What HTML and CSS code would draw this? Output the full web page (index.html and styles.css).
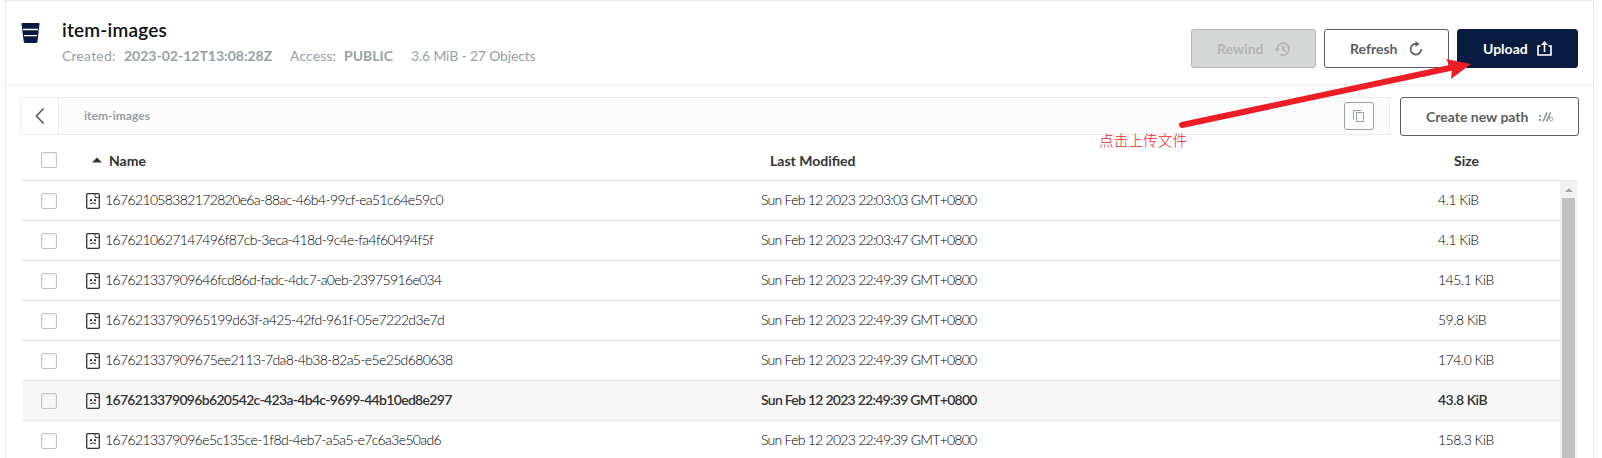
FILE: index.html
```html
<!DOCTYPE html>
<html lang="en">
<head>
<meta charset="utf-8">
<title>item-images</title>
<link rel="stylesheet" href="styles.css">
</head>
<body>
<main class="panel">
  <header class="head">
    <svg class="bucket" viewBox="0 0 18 20"><path fill="#081c42" d="M1 0h16q1.200 0 1 1L16 18.500q-.2 1.500-1.700 1.500H3.900q-1.500 0-1.700-1.500L0 1Q-.2 0 1 0z"/><path stroke="#fff" stroke-width="1.300" d="M1.500 6.500h15M2.500 12.700h13"/></svg>
    <div class="info">
      <h1><span>item-images</span></h1>
      <p><span class="m1">Created:</span><b class="m2">2023-02-12T13:08:28Z</b><span class="m3">Access:</span><b class="m4">PUBLIC</b><span class="m5">3.6 MiB - 27 Objects</span></p>
    </div>
    <div class="actions">
      <button class="btn off"><span>Rewind</span><svg width="16" height="14" viewBox="0 0 16 14"><path fill="none" stroke="currentColor" stroke-width="1.700" d="M3 7.500A6 6 0 1 1 6.500 12.600M9 3.800v3.700l2.700 2"/><path fill="currentColor" d="M0 6.500h6L3 10z"/></svg></button>
      <button class="btn"><span>Refresh</span><svg width="14" height="15" viewBox="0 0 14 15"><path fill="none" stroke="currentColor" stroke-width="1.700" d="M7.500 3A5.300 5.300 0 1 0 12.200 8"/><path fill="currentColor" d="M6.500 0L10.500 3 6.500 6z"/></svg></button>
      <button class="btn primary"><span>Upload</span><svg width="15" height="15" viewBox="0 0 15 15"><path fill="none" stroke="currentColor" stroke-width="1.600" d="M3.500 5H1v9h13V5h-2.500M7.500 11V2"/><path fill="currentColor" d="M4 4L7.500 0 11 4z"/></svg></button>
    </div>
  </header>
  <div class="pathrow">
    <div class="path">
      <div class="back"><svg width="10" height="18" viewBox="0 0 10 18"><path fill="none" stroke="#5e5e5e" stroke-width="1.700" d="M8.500 1.500L1.500 9l7 7.500"/></svg></div>
      <span class="crumb">item-images</span>
      <div class="copy"><svg width="12" height="13" viewBox="0 0 12 13"><path fill="none" stroke="#969fa8" d="M.5 9.500v-9h8M3.500 2.500h7v9h-7z"/></svg></div>
    </div>
    <button class="btn create"><span>Create new path</span><svg width="15" height="10" viewBox="0 0 15 10"><path fill="none" stroke="#8b949d" stroke-width="1.600" d="M4 9.500L8 .5M7.500 9.500l4-9"/><path fill="#969fa8" d="M0 3h2v2H0zM0 7h2v2H0z"/><circle cx="12" cy="7" r="1.800" fill="none" stroke="#969fa8"/></svg></button>
  </div>
  <section class="table">
    <div class="row th"><i class="check"></i><svg class="sort" width="10" height="6" viewBox="0 0 10 6"><path fill="#333" d="M0 5.500L5 .5l5 5z"/></svg><span class="name">Name</span><span class="date">Last Modified</span><span class="size">Size</span></div>
    <div class="body">
      <div class="rows" id="rows"></div>
      <div class="scroll"><i class="arrow"></i><i class="thumb"></i></div>
    </div>
  </section>
</main>
<svg class="pointer" width="300" height="80" viewBox="0 0 300 80"><path stroke="#ee1c25" stroke-width="6" stroke-linecap="round" d="M12 70L280 13"/><path fill="#ee1c25" d="M276 4l25 5-20 15 1-10z"/></svg>
<span class="note">点击上传文件</span>
<script src="rows.js"></script>
</body>
</html>
```
FILE: rows.js
```js
const icon = '<svg class="file" width="14" height="16" viewBox="0 0 14 16"><path fill="none" stroke="#333" stroke-width="1.3" d="M1.700.7H12.300a1 1 0 0 1 1 1V14.300a1 1 0 0 1-1 1H1.700a1 1 0 0 1-1-1V1.700a1 1 0 0 1 1-1z"/><path fill="none" stroke="#444" d="M9 1v3.500h4"/><path fill="none" stroke="#333" d="M4 10.800q3-1.800 6 0"/><path fill="#333" d="M4 6.200h2v2H4zM8 6.200h2v2H8z"/></svg>';
const files = [
  ['167621058382172820e6a-88ac-46b4-99cf-ea51c64e59c0', '22:03:03', '4.1'],
  ['1676210627147496f87cb-3eca-418d-9c4e-fa4f60494f5f', '22:03:47', '4.1'],
  ['167621337909646fcd86d-fadc-4dc7-a0eb-23975916e034', '22:49:39', '145.1'],
  ['16762133790965199d63f-a425-42fd-961f-05e7222d3e7d', '22:49:39', '59.8'],
  ['167621337909675ee2113-7da8-4b38-82a5-e5e25d680638', '22:49:39', '174.0'],
  ['1676213379096b620542c-423a-4b4c-9699-44b10ed8e297', '22:49:39', '43.8'],
  ['1676213379096e5c135ce-1f8d-4eb7-a5a5-e7c6a3e50ad6', '22:49:39', '158.3']
];
document.getElementById('rows').innerHTML = files.map(([n, t, s], i) =>
  `<div class="row${i === 5 ? ' hover' : ''}"><i class="check"></i>${icon}<span class="name">${n}</span><span class="date">Sun Feb 12 2023 ${t} GMT+0800</span><span class="size">${s} KiB</span></div>`).join('');
```
FILE: styles.css
```css
* { box-sizing: border-box; }
body { margin: 0; height: 458px; overflow: hidden; background: #fff; font-family: Lato, "Noto Sans CJK SC", sans-serif; color: #333; font-size: 14px; position: relative; }
.panel { margin: 0 8px 0 5px; height: 458px; border: 1px solid #e8ebeb; border-bottom: 0; overflow: hidden; }
.head { height: 84px; border-bottom: 1px solid #e8ebeb; display: flex; padding: 0 15px; }
.bucket { width: 19px; height: 20px; margin-top: 22px; }
.info { margin-left: 22px; padding-top: 17px; flex: 1; white-space: nowrap; }
h1 { margin: 0; font-size: 19px; letter-spacing: .2px; line-height: 24px; font-weight: 600; color: #111; }
p { margin: 4px 0 0; line-height: 20px; color: #969fa8; display: flex; }
p b, p span { flex: none; }
.m1 { width: 62px; letter-spacing: .2px; }
.m2 { width: 166px; }
.m3 { width: 54px; letter-spacing: .1px; }
.m4 { width: 67px; }
.m5 { letter-spacing: -.18px; }
.actions { display: flex; gap: 8px; padding-top: 28px; }
.btn { height: 39px; width: 125px; border: 1px solid #5e5e5e; border-radius: 3px; background: #fff; color: #5e5e5e; font: bold 14px Lato, sans-serif; display: flex; align-items: center; justify-content: space-between; padding: 0 25px 0 25px; white-space: nowrap; }
.off { background: #d5d7d7; border-color: #b4b4b4; color: #b4b4b4; }
.primary { width: 121px; background: #081c42; border-color: #081c42; color: #fff; }
.pathrow { display: flex; margin: 12px 14px 0 14px; gap: 10px; height: 39px; }
.path { flex: 1; height: 38px; border: 1px solid #eaedee; background: #fcfcfd; display: flex; align-items: center; }
.back { width: 38px; height: 36px; background: #fff; border-right: 1px solid #eaedee; display: flex; align-items: center; justify-content: center; }
.crumb { margin-left: 25px; margin-top: -2px; font-size: 12px; font-weight: bold; letter-spacing: .05px; color: #969fa8; }
.copy { margin-left: auto; margin-right: 15px; width: 30px; height: 28px; border: 1px solid #969fa8; border-radius: 3px; background: #fff; display: flex; align-items: center; justify-content: center; }
.create { width: 179px; padding-right: 24px; }
.table { margin: 4px 16px 0 16px; }
.row { height: 40px; border-bottom: 1px solid #e5e5e5; display: flex; align-items: center; padding-left: 19px; white-space: nowrap; }
.row span { flex: none; }
.check { flex: none; width: 16px; height: 16px; border: 1px solid #c3c3c3; border-radius: 2px; box-shadow: inset 0 1px 3px rgba(0,0,0,.08); margin-top: 1px; }
.th { height: 41px; font-weight: bold; }
.th .check { margin-top: -1px; }
.sort { margin: 0 7px 0 35px; }
.th .name { width: 661px; }
.th .date { width: 684px; }
.body { display: flex; height: 300px; }
.rows { flex: 1; font-weight: 300; color: #000; }
.rows span { margin-top: -2px; }
.file { margin: 1px 5px 0 29px; }
.rows .name { width: 656px; letter-spacing: -.64px; }
.rows .date { width: 677px; letter-spacing: -.74px; }
.rows .size { letter-spacing: -.5px; }
.rows .hover { background: #f7f7f7; font-weight: 600; color: #333; }
.hover .name { letter-spacing: -.68px; }
.scroll { width: 17px; background: #f1f1f1; padding: 7px 2px 0; }
.arrow { display: block; width: 0; margin: 0 auto; border: 4px solid transparent; border-top: 0; border-bottom-color: #a3a3a3; }
.thumb { display: block; height: 300px; margin-top: 6px; background: #c1c1c1; }
.pointer { position: absolute; left: 1170px; top: 55px; overflow: visible; }
.note { position: absolute; left: 1099px; top: 129px; font: 14.700px/22px "Noto Sans CJK SC", sans-serif; font-weight: 300; color: #ee1c25; }
```
